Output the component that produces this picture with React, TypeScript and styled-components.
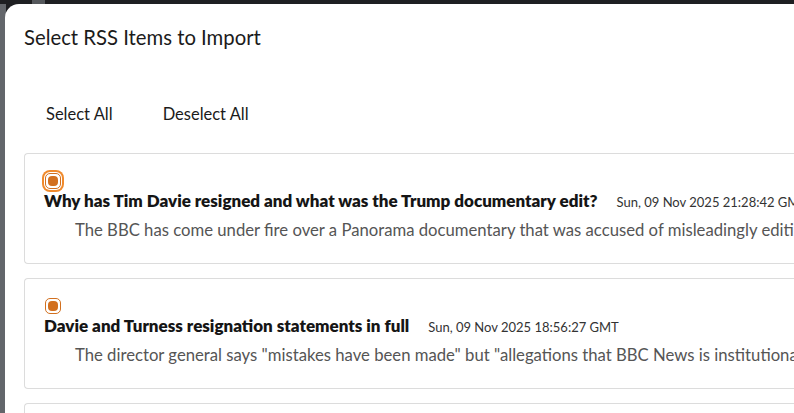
import React, { useState } from "react";
import styled, { createGlobalStyle, css } from "styled-components";

const Global = createGlobalStyle`
  html, body { margin: 0; padding: 0; }
  body {
    background: #1e1f22;
    font-family: Lato, "Noto Sans", sans-serif;
    overflow: hidden;
  }
`;

const Backdrop = styled.div`
  width: 794px;
  height: 413px;
  background: #1e1f22;
  display: flex;
  padding-top: 4px;
  box-sizing: border-box;
  overflow: hidden;
  position: relative;
`;

const SideStrip = styled.div`
  width: 6px;
  flex: none;
  background: #63666b;
`;

const TopTab = styled.div`
  position: absolute;
  left: 32px;
  top: 0;
  width: 13px;
  height: 4px;
  background: #55585c;
`;

const Modal = styled.div`
  flex: 1;
  margin-left: -1px;
  background: #fff;
  border-top-left-radius: 14px;
  padding: 21px 0 0 19px;
  display: flex;
  flex-direction: column;
  min-width: 0;
`;

const Title = styled.h2`
  margin: 0;
  font-size: 20.3px;
  font-weight: 400;
  color: #1b1b1b;
  line-height: 24px;
`;

const Toolbar = styled.div`
  display: flex;
  gap: 14px;
  margin-top: 47px;
  margin-left: 4px;
`;

const TextButton = styled.button`
  background: none;
  border: none;
  font-family: inherit;
  font-size: 16.5px;
  color: #1b1b1b;
  padding: 8px 18px;
  cursor: pointer;
`;

const List = styled.div`
  display: flex;
  flex-direction: column;
  gap: 14px;
  margin-top: 21px;
`;

const Card = styled.div`
  border: 1px solid #dcdcdc;
  border-right: none;
  border-radius: 4px 0 0 4px;
  padding: 14px 0 0 19px;
  height: 111px;
  box-sizing: border-box;
  white-space: nowrap;
  overflow: hidden;
`;

const CheckWrap = styled.div<{ $focused?: boolean }>`
  width: 16px;
  height: 16px;
  border-radius: 5px;
  border: 1px solid #d2701f;
  box-sizing: border-box;
  display: flex;
  align-items: center;
  justify-content: center;
  background: #fff;
  margin: 5px 0 0 1px;
  ${(p) =>
    p.$focused &&
    css`
      box-shadow: 0 0 0 1px #fff, 0 0 0 3px #f08a2c;
    `}
`;

const CheckDot = styled.div`
  width: 10px;
  height: 10px;
  border-radius: 4px;
  background: #d2701f;
`;

const HeadRow = styled.div`
  display: flex;
  align-items: baseline;
  gap: 19px;
  margin-top: 1px;
`;

const ItemTitle = styled.span`
  font-weight: 800;
  font-size: 17px;
  color: #151515;
  line-height: 22px;
`;

const ItemDate = styled.span`
  font-size: 13px;
  color: #333;
`;

const Desc = styled.div`
  font-size: 16.7px;
  color: #555;
  margin: 8px 0 0 31px;
  line-height: 20px;
`;

const items = [
  {
    title: "Why has Tim Davie resigned and what was the Trump documentary edit?",
    date: "Sun, 09 Nov 2025 21:28:42 GMT",
    desc: "The BBC has come under fire over a Panorama documentary that was accused of misleadingly editing a speech by Donald Trump.",
  },
  {
    title: "Davie and Turness resignation statements in full",
    date: "Sun, 09 Nov 2025 18:56:27 GMT",
    desc: "The director general says \"mistakes have been made\" but \"allegations that BBC News is institutionally biased are wrong\".",
  },
  {
    title: "BBC chairman to apologise for Trump edit",
    date: "Sun, 09 Nov 2025 17:00:00 GMT",
    desc: "",
  },
];

export default function App() {
  const [checked] = useState([true, true, true]);
  return (
    <>
      <Global />
      <Backdrop>
        <TopTab />
        <SideStrip />
        <Modal>
          <Title>Select RSS Items to Import</Title>
          <Toolbar>
            <TextButton>Select All</TextButton>
            <TextButton>Deselect All</TextButton>
          </Toolbar>
          <List>
            {items.map((it, i) => (
              <Card key={i}>
                <CheckWrap $focused={i === 0}>{checked[i] && <CheckDot />}</CheckWrap>
                <HeadRow>
                  <ItemTitle>{it.title}</ItemTitle>
                  <ItemDate>{it.date}</ItemDate>
                </HeadRow>
                <Desc>{it.desc}</Desc>
              </Card>
            ))}
          </List>
        </Modal>
      </Backdrop>
    </>
  );
}
